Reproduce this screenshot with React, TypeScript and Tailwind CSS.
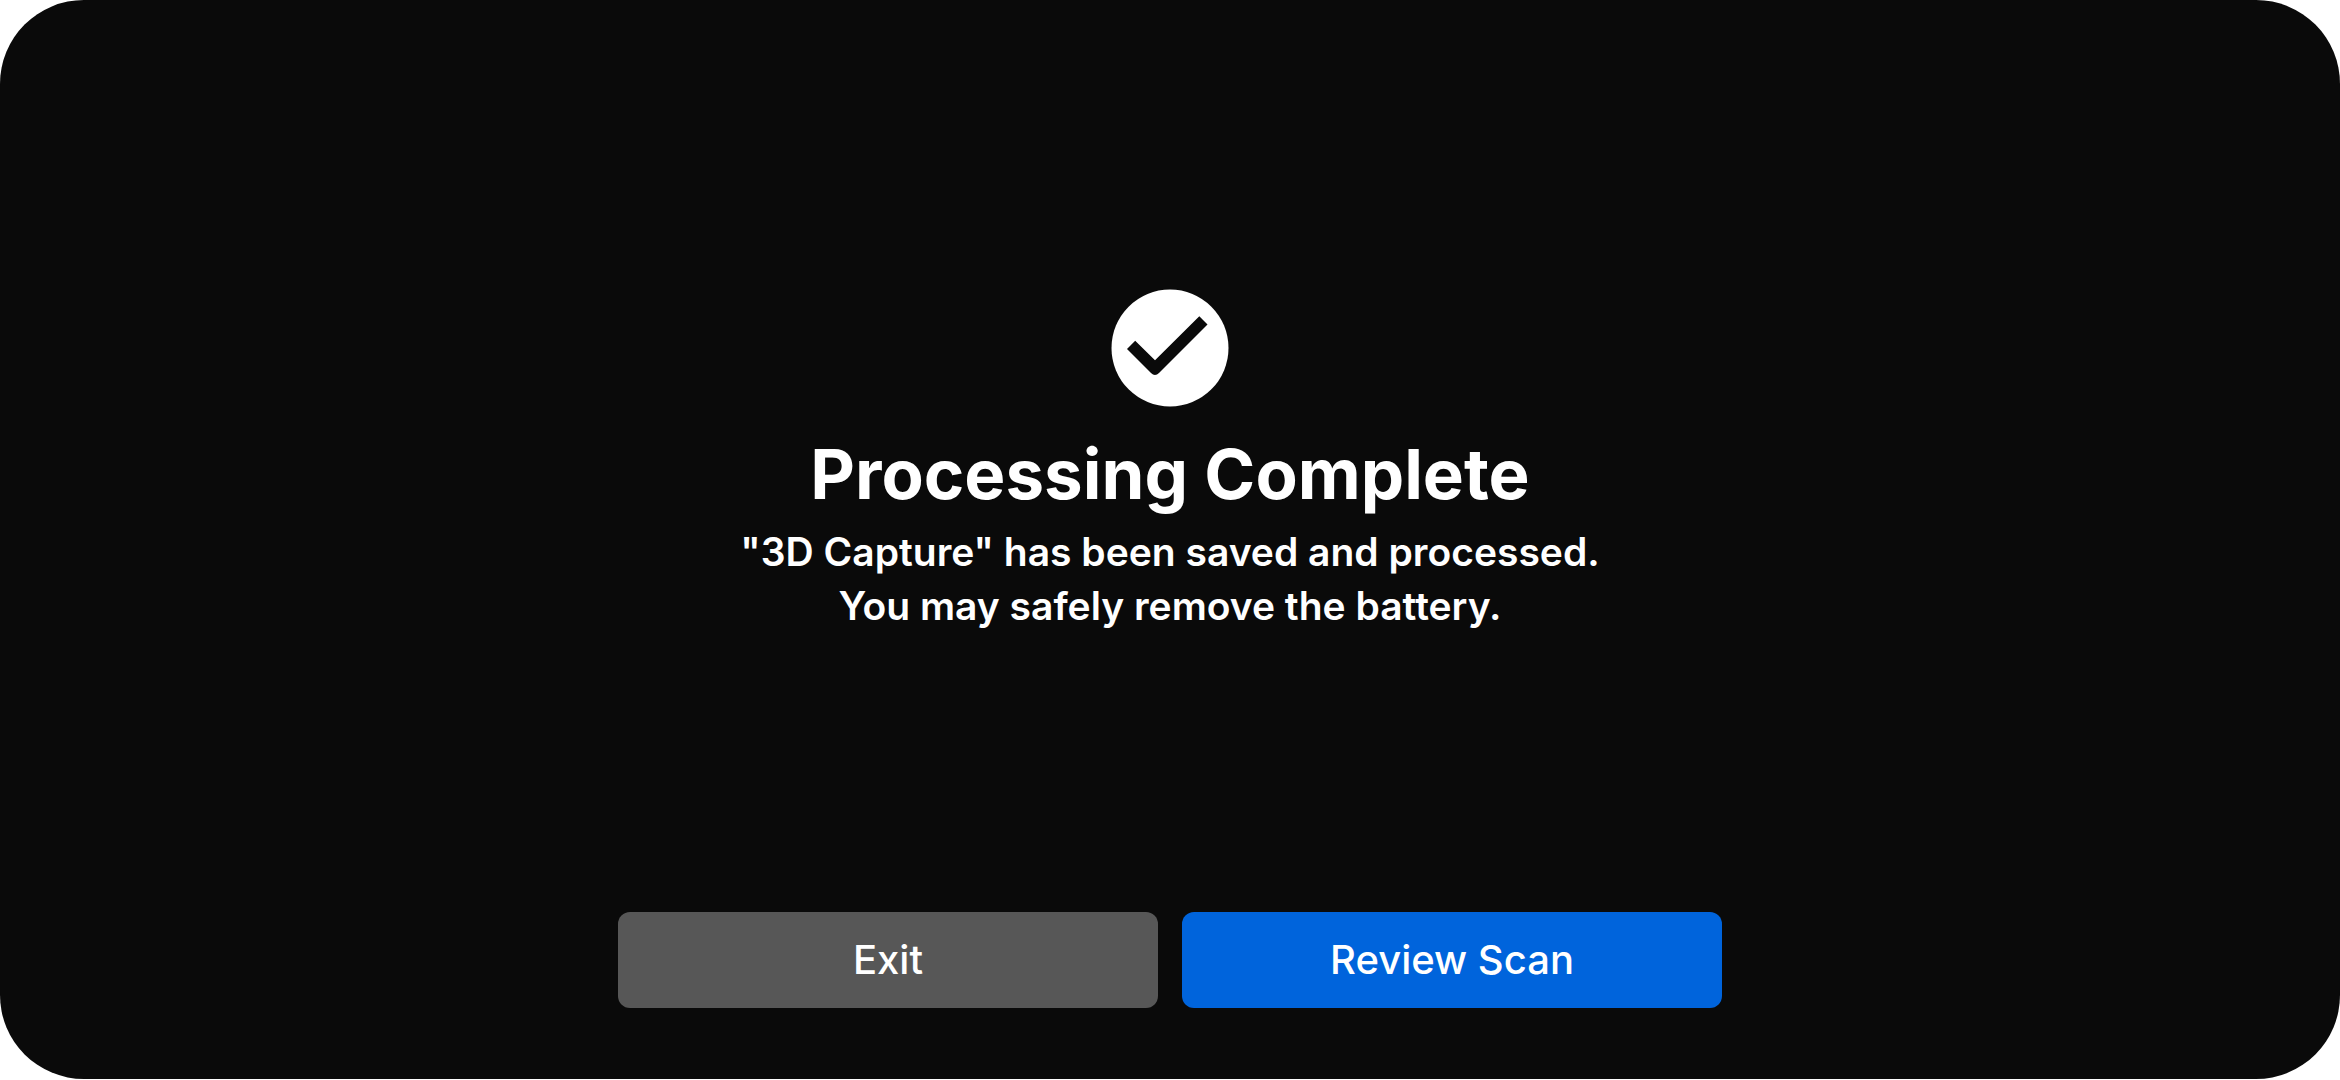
function CheckBadge() {
  return (
    <svg viewBox="0 0 118 118" className="size-[118px]" aria-hidden="true">
      <circle cx="59" cy="59" r="58.5" fill="#ffffff" />
      <path
        fill="#0a0a0a"
        d="M16 60 L24.2 51.8 L44 71.3 L88.3 27.3 L96.5 35.5 L48 84 Q44 88 40 84 Z"
      />
    </svg>
  );
}

export default function App() {
  return (
    <div className="flex min-h-screen flex-col bg-white pb-px font-[Inter,'Liberation_Sans',sans-serif]">
      <main className="flex grow flex-col items-center rounded-[84px] bg-[#0a0a0a] px-12 pb-[71px] text-white">
        <section className="flex grow flex-col items-center pt-[289px] text-center">
          <CheckBadge />
          <h1 className="mt-6 text-[69px] leading-[86px] font-bold">Processing Complete</h1>
          <p className="mt-2 text-[39px] leading-[54px] font-semibold">
            "3D Capture" has been saved and processed.
            <br />
            You may safely remove the battery.
          </p>
        </section>
        <div className="grid w-full max-w-[1104px] grid-cols-2 gap-6">
          <button type="button" className="h-24 rounded-xl bg-[#575757] text-[40px] font-medium">
            Exit
          </button>
          <button type="button" className="h-24 rounded-xl bg-[#0064dc] text-[40px] font-medium">
            Review Scan
          </button>
        </div>
      </main>
    </div>
  );
}
